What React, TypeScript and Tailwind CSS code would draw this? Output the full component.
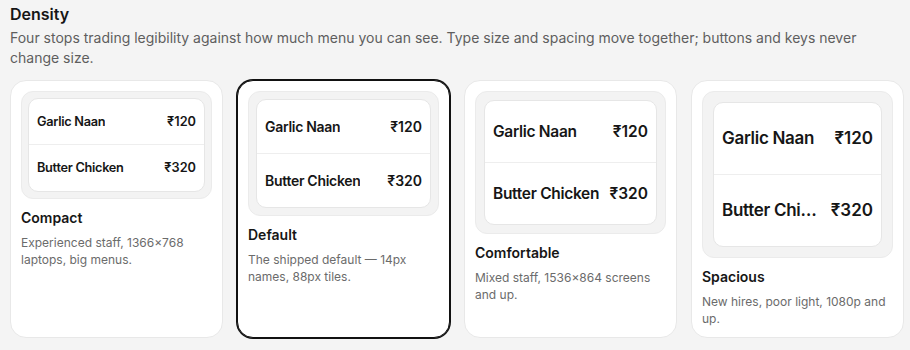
import React from "react";

type Density = {
  key: string;
  title: string;
  desc: string;
  fs: string;
  pad: string;
  row1: string;
  row2: string;
  selected?: boolean;
};

const densities: Density[] = [
  {
    key: "compact",
    title: "Compact",
    desc: "Experienced staff, 1366×768 laptops, big menus.",
    fs: "text-[12.75px]",
    pad: "p-[6px]",
    row1: "h-[46px]",
    row2: "h-[46px]",
  },
  {
    key: "default",
    title: "Default",
    desc: "The shipped default — 14px names, 88px tiles.",
    fs: "text-[14px]",
    pad: "p-[7px]",
    row1: "h-[54px]",
    row2: "h-[53px]",
    selected: true,
  },
  {
    key: "comfortable",
    title: "Comfortable",
    desc: "Mixed staff, 1536×864 screens and up.",
    fs: "text-[15.5px]",
    pad: "p-[8px]",
    row1: "h-[62px]",
    row2: "h-[61px]",
  },
  {
    key: "spacious",
    title: "Spacious",
    desc: "New hires, poor light, 1080p and up.",
    fs: "text-[17px]",
    pad: "p-[10px]",
    row1: "h-[72px]",
    row2: "h-[71px]",
  },
];

function Row({ name, price, h, fs, border }: { name: string; price: string; h: string; fs: string; border?: boolean }) {
  return (
    <div
      className={`flex items-center justify-between gap-1.5 px-2 ${h} ${fs} ${
        border ? "border-b border-[#eeeeee]" : ""
      }`}
    >
      <span className="min-w-0 truncate font-semibold tracking-[-0.3px] text-[#161616]">{name}</span>
      <span className="shrink-0 font-semibold text-[#161616]">{price}</span>
    </div>
  );
}

function Card({ d }: { d: Density }) {
  return (
    <div
      className={`flex flex-col rounded-2xl bg-white p-[10px] ${
        d.selected
          ? "border border-[#111111] shadow-[0_0_0_1px_#111111]"
          : "border border-[#e8e8e8]"
      }`}
    >
      <div className={`rounded-[12px] border border-[#ebebeb] bg-[#f3f3f3] ${d.pad}`}>
        <div className="flex flex-col rounded-[10px] border border-[#e6e6e6] bg-white">
          <Row name="Garlic Naan" price="₹120" h={d.row1} fs={d.fs} border />
          <Row name="Butter Chicken" price="₹320" h={d.row2} fs={d.fs} />
        </div>
      </div>
      <div className="mt-[9px] text-[14px] font-semibold leading-5 text-[#161616]">{d.title}</div>
      <div className="mt-[6px] text-[12px] leading-[17px] text-[#6b6b6b]">{d.desc}</div>
    </div>
  );
}

export default function App() {
  return (
    <div
      className="min-h-[350px] w-[910px] bg-[#f4f4f4] pl-[10px] pr-[6px] pt-[2px]"
      style={{ fontFamily: "Inter, 'Noto Sans', sans-serif" }}
    >
      <h2 className="text-[16px] font-semibold leading-6 text-[#161616]">Density</h2>
      <p className="mt-[2px] text-[14px] leading-5 text-[#5e5e5e]">
        Four stops trading legibility against how much menu you can see. Type size and spacing move together;
        buttons and keys never change size.
      </p>
      <div className="mt-[12px] grid grid-cols-4 gap-[14px]">
        {densities.map((d) => (
          <Card key={d.key} d={d} />
        ))}
      </div>
    </div>
  );
}
